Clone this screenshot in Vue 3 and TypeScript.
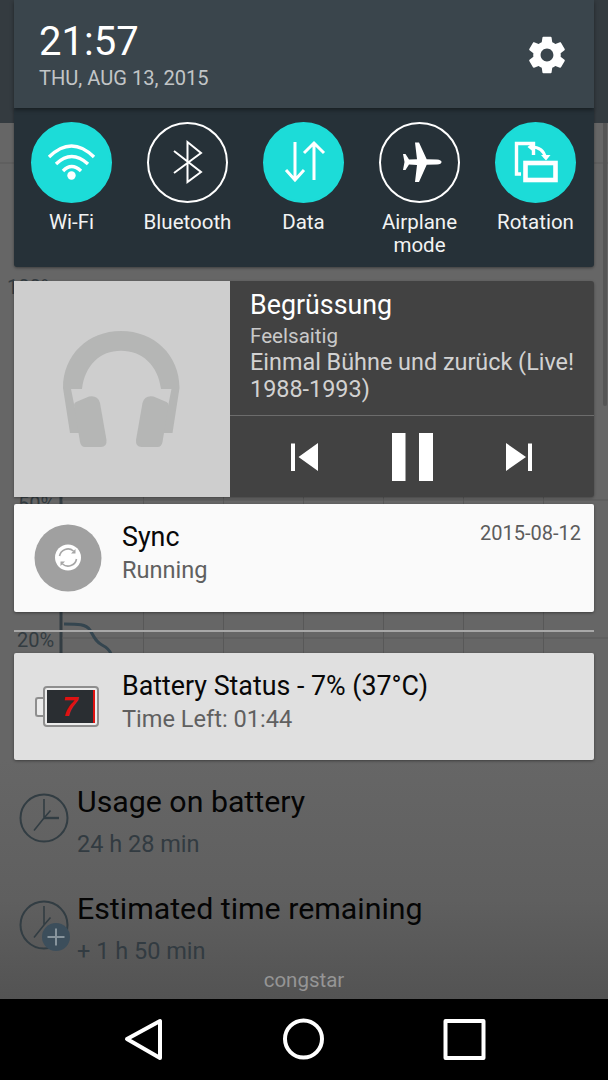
<template>
  <div class="screen">
    <div class="stage">
      <!-- app behind the shade -->
      <div class="backdrop">
        <div class="top-band"></div>
        <div class="scrollbar"></div>
        <svg class="chart" viewBox="0 123 608 650">
          <line v-for="x in gridX" :key="x" :x1="x" y1="283" :x2="x" y2="680" class="grid" />
          <line x1="61" y1="283" x2="61" y2="680" class="axis" />
          <line x1="0" y1="163" x2="608" y2="163" class="grid" />
          <line x1="62" y1="500" x2="608" y2="500" class="grid" />
          <line x1="62" y1="638" x2="608" y2="638" class="grid" />
          <text x="7" y="294" class="pct">100%</text>
          <text x="18" y="511" class="pct">50%</text>
          <text x="17" y="647" class="pct">20%</text>
          <path d="M64 624 C78 624 86 624 90 630 C94 637 96 642 102 645 C108 648 110 651 111 654" class="curve" />
        </svg>
        <div class="usage-row">
          <svg class="clock" viewBox="0 0 52 52">
            <circle cx="26" cy="26" r="23.5" class="clock-ring" />
            <path d="M26 26 V7 M26 26 L16 38.5 M26 26 L32.5 18.5" class="clock-hand" />
            <path d="M26 26 H41" class="clock-hand thick" />
          </svg>
          <div>
            <div class="usage-title">Usage on battery</div>
            <div class="usage-value">24 h 28 min</div>
          </div>
        </div>
        <div class="usage-row">
          <svg class="clock" viewBox="0 0 52 52">
            <circle cx="26" cy="26" r="23.5" class="clock-ring" />
            <path d="M26 26 V7 M26 26 L16 38.5 M26 26 L32.5 18.5" class="clock-hand" />
            <circle cx="38" cy="38" r="14" fill="#3c4e5b" />
            <path d="M38 29.5 V46.5 M29.5 38 H46.5" stroke="#87949c" stroke-width="2" />
          </svg>
          <div>
            <div class="usage-title">Estimated time remaining</div>
            <div class="usage-value">+ 1 h 50 min</div>
          </div>
        </div>
        <div class="carrier">congstar</div>
      </div>

      <div class="panel">
        <header class="header">
          <div>
            <div class="time">21:57</div>
            <div class="date">THU, AUG 13, 2015</div>
          </div>
          <svg class="gear" viewBox="0 0 24 24">
            <path d="M19.43 12.98c.04-.32.07-.64.07-.98s-.03-.66-.07-.98l2.11-1.65c.19-.15.24-.42.12-.64l-2-3.46c-.12-.22-.39-.3-.61-.22l-2.49 1c-.52-.4-1.08-.73-1.69-.98l-.38-2.65C14.46 2.18 14.25 2 14 2h-4c-.25 0-.46.18-.49.42l-.38 2.65c-.61.25-1.17.59-1.69.98l-2.49-1c-.23-.09-.49 0-.61.22l-2 3.46c-.13.22-.07.49.12.64l2.11 1.65c-.04.32-.07.65-.07.98s.03.66.07.98l-2.11 1.65c-.19.15-.24.42-.12.64l2 3.46c.12.22.39.3.61.22l2.49-1c.52.4 1.08.73 1.69.98l.38 2.65c.03.24.24.42.49.42h4c.25 0 .46-.18.49-.42l.38-2.65c.61-.25 1.17-.59 1.69-.98l2.49 1c.23.09.49 0 .61-.22l2-3.46c.12-.22.07-.49-.12-.64l-2.11-1.65zM12 15.5c-1.93 0-3.5-1.57-3.5-3.5s1.57-3.5 3.5-3.5 3.5 1.57 3.5 3.5-1.57 3.5-3.5 3.5z" fill="#fff" />
          </svg>
        </header>

        <section class="quick">
          <div v-for="t in tiles" :key="t.label" class="tile">
            <div class="bubble" :class="{ on: t.on }">
              <svg v-if="t.label === 'Wi-Fi'" viewBox="0 0 81 81">
                <path d="M18 35 Q40.5 13 63 35 M25 42 Q40.5 27 57 42 M32 49 Q40.5 40 50 49" class="ico" stroke-width="3.4" />
                <circle cx="40.5" cy="53.5" r="4.2" fill="#fff" />
              </svg>
              <svg v-else-if="t.label === 'Bluetooth'" viewBox="0 0 81 81">
                <path d="M27 29 L54 50 L40.5 60 V20 L54 31 L27 51" class="ico" stroke-width="2" />
              </svg>
              <svg v-else-if="t.label === 'Data'" viewBox="0 0 81 81">
                <path d="M32 20 V58 M23 48 L32 58 L41 48 M51 58 V21 M41 31 L51 21 L61 31" class="ico" stroke-width="3" />
              </svg>
              <svg v-else-if="t.label === 'Airplane mode'" viewBox="0 0 81 81">
                <path d="M62.5 40 Q62.5 42 58 42.5 L47.7 42.8 L40 60 L36 60 L38 43 L30 42.5 L26.5 48 L24 48 L25.5 40 L24 32 L26.5 32 L30 37.5 L38 37.2 L36 20.5 L40 20.5 L47.7 37.2 L58 37.5 Q62.5 38 62.5 40 Z" fill="#fff" />
              </svg>
              <svg v-else viewBox="0 0 81 81">
                <path d="M38.5 33 V21.5 H21.5 V52 H26" class="ico" stroke-width="3.4" />
                <rect x="30.5" y="41" width="30" height="17" class="ico" stroke-width="4.6" />
                <path d="M36 25 C43 25 49 28 50.5 36" class="ico" stroke-width="3" />
                <path d="M38 20.5 L32.5 25 L38 29.5 Z M46 33 L51 38.5 L55.5 33 Z" fill="#fff" />
              </svg>
            </div>
            <div class="tile-label">{{ t.label }}</div>
          </div>
        </section>

        <section class="media">
          <div class="art">
            <svg viewBox="14 281 216 216">
              <path d="M70 433 L63 388 C63 355 88 331 121 331 C154 331 179.5 355 179.5 388 L172.5 433 L161 433 L168.5 404 L171.5 389 L161 389 C158 365 142 350.7 121 350.7 C100 350.7 85 365 82 389 L71 389 L74 404 L81 433 Z" fill="#b5b6b5" />
              <path d="M74 405 Q74 403 76 402 L89 396.5 Q98 395 100 403 L106.5 440 Q107 447 101 447 L85 447 Q81 447 80 442 Z" fill="#b5b6b5" />
              <path d="M168.5 405 Q168.5 403 166.5 402 L153.5 396.5 Q144.5 395 142.5 403 L136 440 Q135.5 447 141.5 447 L157.5 447 Q161.5 447 162.5 442 Z" fill="#b5b6b5" />
            </svg>
          </div>
          <div class="media-side">
            <div class="track">
              <div class="track-title">Begrüssung</div>
              <div class="track-artist">Feelsaitig</div>
              <div class="track-album">Einmal Bühne und zurück (Live! 1988-1993)</div>
            </div>
            <div class="controls">
              <svg viewBox="0 0 28 28" class="ctl"><path d="M1 0.5 H5 V28 H1 Z M28 0 V28 L8.5 14 Z" fill="#fff" /></svg>
              <svg viewBox="0 0 41 48" class="ctl pause"><path d="M0 0 H13.5 V48 H0 Z M27 0 H41 V48 H27 Z" fill="#fff" /></svg>
              <svg viewBox="0 0 28 28" class="ctl"><path d="M0 0 V28 L20 14 Z M22 0.5 H26 V28 H22 Z" fill="#fff" /></svg>
            </div>
          </div>
        </section>

        <section class="note sync">
          <svg class="note-icon" viewBox="0 0 68 68">
            <circle cx="34" cy="34" r="33.5" fill="#a0a0a0" />
            <circle cx="34" cy="33.5" r="13" fill="#fff" />
            <path d="M25.5 32 A8.6 8.6 0 0 1 39.5 27 M42.5 35 A8.6 8.6 0 0 1 28.5 40" fill="none" stroke="#a6a6a6" stroke-width="1.6" />
            <path d="M41.5 25 V29.5 H37 Z M26.5 42 V37.5 H31 Z" fill="#a6a6a6" />
          </svg>
          <div class="note-text">
            <div class="note-title">Sync</div>
            <div class="note-sub">Running</div>
          </div>
          <div class="note-date">2015-08-12</div>
        </section>

        <div class="group-gap"><div class="group-line"></div></div>

        <section class="note battery">
          <div class="batt">
            <div class="batt-nub"></div>
            <div class="batt-body">
              <div class="batt-screen"><span>7</span></div>
            </div>
          </div>
          <div class="note-text">
            <div class="note-title">Battery Status - 7% (37°C)</div>
            <div class="note-sub">Time Left: 01:44</div>
          </div>
        </section>
      </div>
    </div>

    <nav class="nav">
      <svg viewBox="0 0 608 81">
        <path d="M127 40 L160 22 V59 Z" class="nav-ico" />
        <circle cx="303.5" cy="40" r="18.5" class="nav-ico" />
        <rect x="445.5" y="22" width="38" height="37" class="nav-ico" />
      </svg>
    </nav>
  </div>
</template>

<script setup lang="ts">
const gridX = [143.5, 223.5, 303.5, 383.5, 463.5, 543.5]

const tiles = [
  { label: 'Wi-Fi', on: true },
  { label: 'Bluetooth', on: false },
  { label: 'Data', on: true },
  { label: 'Airplane mode', on: false },
  { label: 'Rotation', on: true },
]
</script>

<style>
html,
body {
  margin: 0;
  background: #000;
}
</style>

<style scoped>
.screen {
  width: 608px;
  height: 1080px;
  display: flex;
  flex-direction: column;
  overflow: hidden;
  font-family: Roboto, "Noto Sans", sans-serif;
}

.stage {
  position: relative;
  flex: 1;
  overflow: hidden;
}

.backdrop {
  position: absolute;
  inset: 0;
  display: flex;
  flex-direction: column;
  background: linear-gradient(#666 0, #666 760px, #5f5f5f 900px, #535353 100%);
}

.top-band {
  height: 123px;
  background: #343b40;
  flex: none;
}

.scrollbar {
  position: absolute;
  top: 123px;
  left: 603px;
  width: 4px;
  height: 283px;
  background: #555;
  border-radius: 0 0 2px 2px;
}

.chart {
  width: 608px;
  height: 650px;
  flex: none;
  margin-bottom: -3px;
}

.grid {
  stroke: #585858;
  stroke-width: 1;
}

.axis {
  stroke: #333d43;
  stroke-width: 3;
}

.pct {
  font-size: 20px;
  fill: #333c41;
}

.curve {
  fill: none;
  stroke: #34454f;
  stroke-width: 3;
}

.usage-row {
  display: flex;
  gap: 7px;
  height: 107px;
  padding-left: 18px;
  flex: none;
}

.clock {
  width: 52px;
  height: 52px;
  margin-top: 22px;
  flex: none;
  overflow: visible;
}

.clock-ring {
  fill: none;
  stroke: #323d43;
  stroke-width: 2;
}

.clock-hand {
  fill: none;
  stroke: #323d43;
  stroke-width: 1.6;
}

.clock-hand.thick {
  stroke-width: 2.4;
}

.usage-title {
  font-size: 30.3px;
  line-height: 38px;
  color: #050505;
  margin-top: 13px;
}

.usage-value {
  font-size: 23.5px;
  line-height: 28px;
  color: #323b41;
  margin-top: 9px;
}

.carrier {
  position: absolute;
  left: 0;
  right: 0;
  top: 967px;
  text-align: center;
  font-size: 20.5px;
  line-height: 26px;
  color: #959595;
}

.panel {
  position: relative;
  margin: 0 14px;
  display: flex;
  flex-direction: column;
}

.header {
  height: 108px;
  padding: 0 25px 0 25px;
  box-sizing: border-box;
  display: flex;
  align-items: center;
  justify-content: space-between;
  background: #3a454c;
  box-shadow: 0 2px 4px rgba(0, 0, 0, 0.4);
  position: relative;
}

.time {
  font-size: 40px;
  line-height: 44px;
  color: #fff;
  margin-top: 17px;
}

.date {
  font-size: 20.1px;
  line-height: 26px;
  color: #c2c5c7;
  margin-top: 1px;
  margin-bottom: 14px;
}

.gear {
  width: 44px;
  height: 44px;
  flex: none;
  margin-top: 2px;
}

.quick {
  height: 159px;
  box-sizing: border-box;
  background: #263138;
  border-radius: 0 0 3px 3px;
  padding: 14px 0 0;
  display: grid;
  grid-template-columns: repeat(5, 116px);
  box-shadow: 0 1px 3px rgba(0, 0, 0, 0.4);
}

.tile {
  display: flex;
  flex-direction: column;
  align-items: center;
  box-sizing: border-box;
  padding-right: 1px;
}

.bubble {
  width: 81px;
  height: 81px;
  box-sizing: border-box;
  border-radius: 50%;
  border: 2px solid #fff;
  flex: none;
  position: relative;
}

.bubble.on {
  background: #1cdcd8;
  border-color: #1cdcd8;
}

.bubble svg {
  position: absolute;
  left: -2px;
  top: -2px;
  width: 81px;
  height: 81px;
}

.ico {
  fill: none;
  stroke: #fff;
}

.tile-label {
  width: 110px;
  margin-top: 8px;
  text-align: center;
  font-size: 20.5px;
  line-height: 23px;
  color: #f2f3f3;
}

.media {
  margin-top: 14px;
  height: 216px;
  display: flex;
  background: #424242;
  border-radius: 0 3px 3px 0;
  box-shadow: 0 1px 3px rgba(0, 0, 0, 0.35);
}

.art {
  width: 216px;
  height: 216px;
  background: #cecece;
  flex: none;
}

.art svg {
  display: block;
  width: 216px;
  height: 216px;
}

.media-side {
  flex: 1;
  display: flex;
  flex-direction: column;
  min-width: 0;
}

.track {
  height: 135px;
  box-sizing: border-box;
  padding: 9px 12px 0 20px;
  border-bottom: 1px solid #6c6c6c;
}

.track-title {
  font-size: 26.8px;
  line-height: 30px;
  color: #fff;
}

.track-artist {
  font-size: 20.6px;
  line-height: 22px;
  color: #c9c9c9;
  margin-top: 5px;
}

.track-album {
  font-size: 23.4px;
  line-height: 27px;
  color: #d2d2d2;
  margin-top: 2px;
}

.controls {
  flex: 1;
  display: flex;
  align-items: center;
  justify-content: space-between;
  padding: 0 60px;
}

.ctl {
  width: 28px;
  height: 28px;
}

.ctl.pause {
  width: 41px;
  height: 48px;
}

.note {
  height: 108px;
  box-sizing: border-box;
  display: flex;
  align-items: flex-start;
  position: relative;
  border-radius: 2px;
  box-shadow: 0 1px 3px rgba(0, 0, 0, 0.4);
}

.sync {
  margin-top: 7px;
  background: #fafafa;
}

.battery {
  height: 107px;
  background: #e0e0e0;
}

.note-icon {
  width: 68px;
  height: 68px;
  margin: 20px 0 0 20px;
  flex: none;
}

.note-text {
  position: absolute;
  left: 108px;
  top: 17px;
}

.note-title {
  font-size: 26.8px;
  line-height: 33px;
  color: #080808;
}

.note-sub {
  font-size: 23.6px;
  line-height: 28px;
  color: #606060;
  margin-top: 2px;
}

.note-date {
  margin: 16px 13px 0 auto;
  font-size: 20px;
  line-height: 26px;
  color: #5c5c5c;
}

.group-gap {
  height: 41px;
  display: flex;
  align-items: center;
}

.group-line {
  height: 2px;
  width: 100%;
  background: #a8a8a8;
  margin-top: -3px;
}

.batt {
  display: flex;
  align-items: center;
  margin: 33px 0 0 21px;
  height: 41px;
}

.batt-nub {
  width: 8px;
  height: 20px;
  box-sizing: border-box;
  border: 2px solid #8e8e8e;
  border-right: 0;
  border-radius: 3px 0 0 3px;
  background: #ececec;
}

.batt-body {
  width: 56px;
  height: 41px;
  box-sizing: border-box;
  border: 2px solid #8e8e8e;
  border-radius: 4px;
  background: #ececec;
  padding: 2px;
}

.batt-screen {
  height: 100%;
  background: #2a2e32;
  border-right: 2px solid #e01212;
  display: flex;
  align-items: center;
  justify-content: center;
}

.batt-screen span {
  font-family: "Liberation Sans", sans-serif;
  font-size: 27px;
  font-weight: 700;
  font-style: italic;
  line-height: 30px;
  color: #e01212;
}

.nav {
  height: 81px;
  background: #000;
  flex: none;
}

.nav svg {
  display: block;
  width: 608px;
  height: 81px;
}

.nav-ico {
  fill: none;
  stroke: #fff;
  stroke-width: 4;
  stroke-linejoin: round;
}
</style>
